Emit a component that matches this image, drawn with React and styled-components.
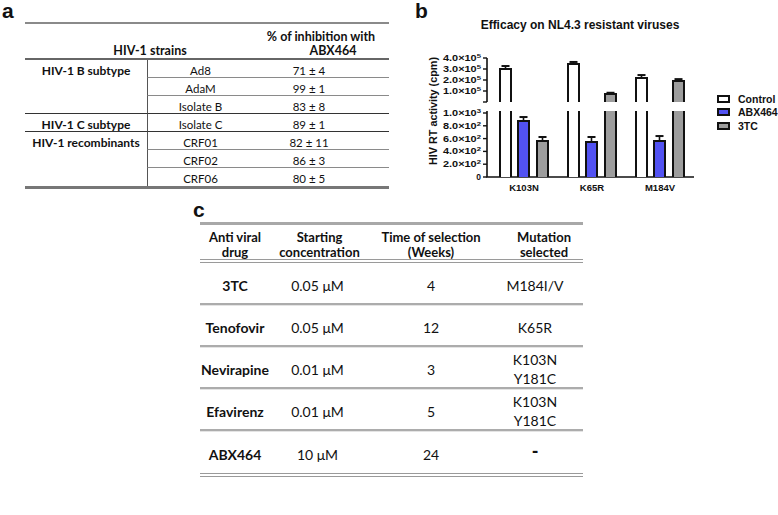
import React from 'react';
import styled, { createGlobalStyle } from 'styled-components';

const GlobalStyle = createGlobalStyle`
  html, body { margin: 0; padding: 0; background: #fff; }
  body { font-family: Lato, "Liberation Sans", sans-serif; color: #111; }
  * { box-sizing: border-box; }
`;

const Page = styled.div`
  width: 778px;
  height: 515px;
  overflow: hidden;
  background: #fff;
  display: flex;
  flex-direction: column;
`;

const TopRow = styled.div`
  display: flex;
  align-items: flex-start;
`;

const PanelLabel = styled.div`
  font-family: "Liberation Sans", Arial, sans-serif;
  font-weight: 700;
  font-size: 21px;
  line-height: 21px;
  margin-left: ${p => p.$indent}px;
`;

/* ---------- panel a ---------- */

const PanelA = styled.section`
  width: 405px;
  flex: none;
`;

const StrainTable = styled.div`
  display: grid;
  grid-template-columns: 122px 106px 136px;
  grid-template-rows: 36px repeat(7, 18px);
  margin: 1px 0 0 25px;
  width: 364px;
  border-top: 2px solid #8a8a8a;
  border-bottom: 3px solid #777;
  font-size: 11.5px;
`;

const HeadCell = styled.div`
  grid-column: span ${p => p.$span || 1};
  display: flex;
  flex-direction: column;
  justify-content: flex-end;
  align-items: center;
  padding: 0 ${p => p.$padR || 0}px 0 ${p => p.$padL || 0}px;
  border-bottom: 2px solid #666;
  font-size: 12.5px;
  font-weight: 700;
  line-height: 14px;
`;

const HeadLine = styled.span`
  margin-left: ${p => p.$shift || 0}px;
`;

const GroupCell = styled.div`
  grid-row: span ${p => p.$span};
  font-weight: 700;
  font-size: 12px;
  text-align: center;
  padding-top: 4px;
  line-height: 14px;
  border-bottom: ${p => (p.$last ? 'none' : '1px solid #333')};
`;

const DataCell = styled.div`
  text-align: center;
  padding-top: 4px;
  padding-right: ${p => p.$padR || 0}px;
  line-height: 14px;
  border-left: ${p => (p.$divider ? '1px solid #555' : 'none')};
  border-bottom: ${p =>
    p.$last ? 'none' : p.$end ? '1px solid #333' : '1px solid #8a8a8a'};
`;

const strainGroups = [
  {
    name: 'HIV-1 B subtype',
    rows: [
      ['Ad8', '71 ± 4'],
      ['AdaM', '99 ± 1'],
      ['Isolate B', '83 ± 8'],
    ],
  },
  { name: 'HIV-1 C subtype', rows: [['Isolate C', '89 ± 1']] },
  {
    name: 'HIV-1 recombinants',
    rows: [
      ['CRF01', '82 ± 11'],
      ['CRF02', '86 ± 3'],
      ['CRF06', '80 ± 5'],
    ],
  },
];

function StrainPanel() {
  return (
    <PanelA>
      <PanelLabel $indent={2}>a</PanelLabel>
      <StrainTable>
        <HeadCell $span={2} $padL={22}>HIV-1 strains</HeadCell>
        <HeadCell>
          <HeadLine>% of inhibition with</HeadLine>
          <HeadLine $shift={24}>ABX464</HeadLine>
        </HeadCell>
        {strainGroups.map((g, gi) => {
          const lastGroup = gi === strainGroups.length - 1;
          return (
            <React.Fragment key={g.name}>
              <GroupCell $span={g.rows.length} $last={lastGroup}>
                {g.name}
              </GroupCell>
              {g.rows.map(([strain, value], ri) => {
                const end = ri === g.rows.length - 1;
                const last = lastGroup && end;
                return (
                  <React.Fragment key={strain}>
                    <DataCell $divider $end={end} $last={last}>{strain}</DataCell>
                    <DataCell $end={end} $last={last} $padR={24}>{value}</DataCell>
                  </React.Fragment>
                );
              })}
            </React.Fragment>
          );
        })}
      </StrainTable>
    </PanelA>
  );
}

/* ---------- panel b ---------- */

const PanelB = styled.section`
  flex: 1;
  display: flex;
  flex-direction: column;
`;

const ChartTitle = styled.div`
  width: 350px;
  margin-top: -2px;
  text-align: center;
  font-family: "Liberation Sans", Arial, sans-serif;
  font-weight: 700;
  font-size: 12px;
  line-height: 12px;
`;

const ChartRow = styled.div`
  display: flex;
  align-items: flex-start;
  margin-top: 4px;
`;

const ChartSvg = styled.svg`
  display: block;
  margin-left: 20px;
  flex: none;
`;

const Legend = styled.ul`
  list-style: none;
  margin: 57px 0 0 17px;
  padding: 0;
  display: flex;
  flex-direction: column;
`;

const LegendItem = styled.li`
  display: flex;
  align-items: center;
  gap: 8px;
  height: 13.5px;
  font-family: "Liberation Sans", Arial, sans-serif;
  font-weight: 700;
  font-size: 10.5px;
`;

const Swatch = styled.span`
  width: 13px;
  height: 8px;
  border: 2px solid #111;
  background: ${p => p.$color};
`;

const BLUE = '#5252f2';
const GRAY = '#9d9d9d';
const fills = ['#fff', BLUE, GRAY];
const offsets = [0, 18, 37];

const UPPER_BASE = 102;
const LOWER_TOP = 111;
const ZERO = 177;
const yHi = v => UPPER_BASE - v * 11;
const yLo = v => ZERO - v * 0.064;

const barGroups = [
  { label: 'K103N', x: 499, bars: [{ hi: 3.0, e: 3.27 }, { lo: 875, e: 937 }, { lo: 562, e: 625 }] },
  { label: 'K65R', x: 567, bars: [{ hi: 3.45, e: 3.64 }, { lo: 547, e: 625 }, { hi: 0.73, e: 0.84 }] },
  { label: 'M184V', x: 635, bars: [{ hi: 2.18, e: 2.45 }, { lo: 562, e: 640 }, { hi: 1.9, e: 2.08 }] },
];

function Bar({ x, bar, fill }) {
  const w = 13;
  const l = x + 1;
  const r = x + w - 1;
  const mid = x + w / 2;
  const pieces = [];
  let top;
  let err;
  if (bar.hi != null) {
    top = yHi(bar.hi);
    err = yHi(bar.e);
    pieces.push([top, UPPER_BASE, true]);
    pieces.push([LOWER_TOP, ZERO, false]);
  } else {
    top = yLo(bar.lo);
    err = yLo(bar.e);
    pieces.push([top, ZERO, true]);
  }
  return (
    <g>
      <line x1={mid} y1={top} x2={mid} y2={err} stroke="#111" strokeWidth="1.6" />
      <line x1={mid - 4} y1={err} x2={mid + 4} y2={err} stroke="#111" strokeWidth="2" />
      {pieces.map(([y1, y2, capped], i) => (
        <g key={i}>
          <rect x={l} y={y1} width={r - l} height={y2 - y1} fill={fill} />
          <path
            d={capped ? `M${l} ${y2} V${y1} H${r} V${y2}` : `M${l} ${y1} V${y2} M${r} ${y1} V${y2}`}
            fill="none"
            stroke="#111"
            strokeWidth="2"
          />
        </g>
      ))}
    </g>
  );
}

const upperTicks = [
  [4, '4.0×10', '5'],
  [3, '3.0×10', '5'],
  [2, '2.0×10', '5'],
  [1, '1.0×10', '5'],
];
const lowerTicks = [
  [1000, '1.0×10', '3'],
  [800, '8.0×10', '2'],
  [600, '6.0×10', '2'],
  [400, '4.0×10', '2'],
  [200, '2.0×10', '2'],
];

function TickLabel({ y, base, exp }) {
  return (
    <text x={481} y={y + 3} textAnchor="end" fontSize="8.5" textLength="38" lengthAdjust="spacingAndGlyphs">
      {base}
      <tspan dy="-3" fontSize="6">{exp}</tspan>
    </text>
  );
}

function Chart() {
  return (
    <ChartSvg width="275" height="160" viewBox="425 35 275 160">
      <g fontFamily="Liberation Sans, Arial, sans-serif" fontWeight="700" fill="#111">
        <text
          transform="translate(437 111) rotate(-90)"
          textAnchor="middle"
          fontSize="10.5"
          textLength="108"
          lengthAdjust="spacingAndGlyphs"
        >
          HIV RT activity (cpm)
        </text>

        <path d={`M487 ${yHi(4)} V${UPPER_BASE} M487 ${LOWER_TOP} V${ZERO} H694`} stroke="#111" strokeWidth="1.6" fill="none" />
        {upperTicks.map(([v, b, e]) => (
          <g key={b + e}>
            <line x1={483} x2={487} y1={yHi(v)} y2={yHi(v)} stroke="#111" strokeWidth="1.4" />
            <TickLabel y={yHi(v)} base={b} exp={e} />
          </g>
        ))}
        <line x1={483} x2={487} y1={UPPER_BASE} y2={UPPER_BASE} stroke="#111" strokeWidth="1.4" />
        {lowerTicks.map(([v, b, e]) => (
          <g key={b + e}>
            <line x1={483} x2={487} y1={yLo(v)} y2={yLo(v)} stroke="#111" strokeWidth="1.4" />
            <TickLabel y={yLo(v)} base={b} exp={e} />
          </g>
        ))}
        <line x1={483} x2={487} y1={ZERO} y2={ZERO} stroke="#111" strokeWidth="1.4" />
        <text x={481} y={ZERO + 3} textAnchor="end" fontSize="8.5">0</text>

        {barGroups.map(g => (
          <g key={g.label}>
            {g.bars.map((b, i) => (
              <Bar key={i} x={g.x + offsets[i]} bar={b} fill={fills[i]} />
            ))}
            <text x={g.x + 25} y={191} textAnchor="middle" fontSize="9.5">
              {g.label}
            </text>
          </g>
        ))}
      </g>
    </ChartSvg>
  );
}

function EfficacyPanel() {
  return (
    <PanelB>
      <PanelLabel $indent={10}>b</PanelLabel>
      <ChartTitle>Efficacy on NL4.3 resistant viruses</ChartTitle>
      <ChartRow>
        <Chart />
        <Legend>
          <LegendItem><Swatch $color="#fff" />Control</LegendItem>
          <LegendItem><Swatch $color={BLUE} />ABX464</LegendItem>
          <LegendItem><Swatch $color={GRAY} />3TC</LegendItem>
        </Legend>
      </ChartRow>
    </PanelB>
  );
}

/* ---------- panel c ---------- */

const PanelC = styled.section`
  margin: 4px 0 0 193px;
`;

const SelectionTable = styled.div`
  display: grid;
  grid-template-columns: 70px 95px 132px 86px;
  width: 383px;
  margin: 2px 0 0 7px;
  border-top: 3px solid #a8a8a8;
  border-bottom: 4px double #9a9a9a;
  font-size: 14px;
`;

const SelHead = styled.div`
  height: 38px;
  padding: 5px ${p => p.$padR || 0}px 0 ${p => p.$padL || 0}px;
  display: flex;
  flex-direction: column;
  align-items: center;
  font-size: 13px;
  font-weight: 700;
  line-height: 15px;
  border-bottom: 4px double #9a9a9a;
`;

const SelCell = styled.div`
  height: 42px;
  padding: 4px ${p => p.$padR || 0}px 0 0;
  display: flex;
  flex-direction: column;
  align-items: center;
  justify-content: center;
  line-height: 19px;
  font-weight: ${p => (p.$bold ? 700 : 400)};
  border-bottom: ${p => (p.$last ? 'none' : '2px solid #acacac')};
  box-shadow: ${p => (p.$last ? 'none' : '0 1px 0 #e4e4e4')};
`;

const NoMutation = styled.span`
  font-weight: 900;
  font-size: 18px;
  margin-top: -6px;
`;

const selections = [
  { drug: '3TC', conc: '0.05 μM', weeks: '4', mut: ['M184I/V'] },
  { drug: 'Tenofovir', conc: '0.05 μM', weeks: '12', mut: ['K65R'] },
  { drug: 'Nevirapine', conc: '0.01 μM', weeks: '3', mut: ['K103N', 'Y181C'] },
  { drug: 'Efavirenz', conc: '0.01 μM', weeks: '5', mut: ['K103N', 'Y181C'] },
  { drug: 'ABX464', conc: '10 μM', weeks: '24', mut: [] },
];

function SelectionPanel() {
  return (
    <PanelC>
      <PanelLabel $indent={0}>c</PanelLabel>
      <SelectionTable>
        <SelHead><span>Anti viral</span><span>drug</span></SelHead>
        <SelHead $padL={4}><span>Starting</span><span>concentration</span></SelHead>
        <SelHead><span>Time of selection</span><span>(Weeks)</span></SelHead>
        <SelHead $padL={8}><span>Mutation</span><span>selected</span></SelHead>
        {selections.map((s, i) => {
          const last = i === selections.length - 1;
          return (
            <React.Fragment key={s.drug}>
              <SelCell $bold $last={last}>{s.drug}</SelCell>
              <SelCell $last={last}>{s.conc}</SelCell>
              <SelCell $last={last}>{s.weeks}</SelCell>
              <SelCell $last={last} $padR={10}>
                {s.mut.length ? s.mut.map(m => <span key={m}>{m}</span>) : <NoMutation>-</NoMutation>}
              </SelCell>
            </React.Fragment>
          );
        })}
      </SelectionTable>
    </PanelC>
  );
}

export default function App() {
  return (
    <Page>
      <GlobalStyle />
      <TopRow>
        <StrainPanel />
        <EfficacyPanel />
      </TopRow>
      <SelectionPanel />
    </Page>
  );
}
